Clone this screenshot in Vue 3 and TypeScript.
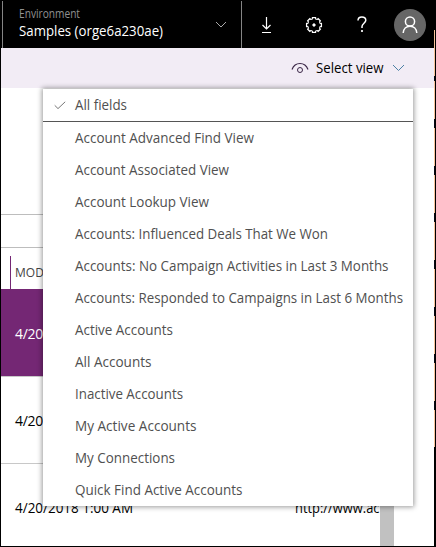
<script setup lang="ts">
interface ViewOption {
  label: string
  width: number
}

const views: ViewOption[] = [
  { label: 'Account Advanced Find View', width: 179 },
  { label: 'Account Associated View', width: 154 },
  { label: 'Account Lookup View', width: 134 },
  { label: 'Accounts: Influenced Deals That We Won', width: 253 },
  { label: 'Accounts: No Campaign Activities in Last 3 Months', width: 313.5 },
  { label: 'Accounts: Responded to Campaigns in Last 6 Months', width: 328 },
  { label: 'Active Accounts', width: 98 },
  { label: 'All Accounts', width: 76.5 },
  { label: 'Inactive Accounts', width: 108 },
  { label: 'My Active Accounts', width: 121.5 },
  { label: 'My Connections', width: 100 },
  { label: 'Quick Find Active Accounts', width: 167.5 },
]

const teeth = [0, 45, 90, 135, 180, 225, 270, 315]
</script>

<template>
  <div class="window">
    <div class="screen">
      <header class="top">
        <div class="env">
          <div class="env-text">
            <div class="env-label"><svg width="62" height="16"><text x="0" y="12" textLength="61" lengthAdjust="spacingAndGlyphs">Environment</text></svg></div>
            <div class="env-name"><svg width="146" height="20"><text x="0" y="14.5" textLength="144" lengthAdjust="spacingAndGlyphs">Samples (orge6a230ae)</text></svg></div>
          </div>
          <svg class="env-chevron" width="12" height="8" viewBox="0 0 12 8"><path d="M1 1l5 5 5-5" /></svg>
        </div>
        <div class="tool"><svg width="12" height="18" viewBox="0 0 12 18"><path d="M6.500 1v12M2.500 9l4 4 4-4M2 16.500h9" /></svg></div>
        <div class="tool gear">
          <svg width="18" height="18" viewBox="-9 -9 18 18">
            <path v-for="angle in teeth" :key="angle" :transform="`rotate(${angle})`" d="M-2.400-5.800Q-1.700-5.700-1.500-7.400H1.500Q1.700-5.700 2.400-5.800" />
            <circle cx="0" cy="0" r="1.200" class="dot" />
          </svg>
        </div>
        <div class="tool help"><svg width="10" height="17" viewBox="0 0 10 17"><path d="M1 4.500C1 2.300 2.700 1 4.900 1S8.800 2.300 8.800 4.300C8.800 7 5 7.500 5 10.500V12" /><circle cx="5" cy="15" r=".7" class="dot" /></svg></div>
        <div class="avatar"><svg width="16" height="18" viewBox="0 0 16 18"><circle cx="8" cy="5.500" r="4.600" /><path d="M1.200 17c.2-4 3-6.800 6.800-6.800s6.600 2.800 6.800 6.800" /></svg></div>
      </header>

      <div class="command">
        <svg class="eye" width="18" height="12" viewBox="0 0 18 12"><path d="M1 7.500C2.500 3.500 5.500 1.500 9 1.500S15.500 3.500 17 7.500" /><circle cx="9" cy="8" r="2.500" /></svg>
        <svg class="select" width="70" height="20"><text x="0" y="15" textLength="67.500" lengthAdjust="spacingAndGlyphs">Select view</text></svg>
        <svg class="chevron" width="13" height="8" viewBox="0 0 13 8"><path d="M1 1l5.500 5.500L12 1" /></svg>
      </div>

      <main class="grid">
        <div class="table">
          <div class="band band-top"></div>
          <div class="band"></div>
          <div class="columns"><span class="column">MOD</span></div>
          <div class="row selected"><span class="date">4/20</span></div>
          <div class="row"><span class="date">4/20</span></div>
          <div class="row last">
            <svg class="date" width="120" height="20"><text x="0" y="16" textLength="118" lengthAdjust="spacingAndGlyphs">4/20/2018 1:00 AM</text></svg>
            <svg class="link" width="85" height="20"><text x="0" y="16" textLength="84.500" lengthAdjust="spacingAndGlyphs">http://www.ac</text></svg>
          </div>
        </div>
        <div class="scroll"></div>
      </main>
    </div>
    <div class="edge"><i v-for="n in 8" :key="n"></i></div>

    <div class="menu">
      <div class="option current">
        <svg class="check" width="12" height="9" viewBox="0 0 12 9"><path d="M.7 4.300l3.300 3.300L11.200.8" /></svg>
        <svg class="label" width="60" height="20"><text x="0" y="15" textLength="52" lengthAdjust="spacingAndGlyphs">All fields</text></svg>
      </div>
      <div v-for="view in views" :key="view.label" class="option">
        <svg class="label" width="335" height="20"><text x="0" y="15" :textLength="view.width" lengthAdjust="spacingAndGlyphs">{{ view.label }}</text></svg>
      </div>
    </div>
  </div>
</template>

<style>
body {
  margin: 0;
}
</style>

<style scoped>
.window {
  position: relative;
  box-sizing: border-box;
  display: flex;
  width: 436px;
  height: 547px;
  padding: 1px;
  background: #000;
  overflow: hidden;
  font-family: "Open Sans", "Noto Sans", sans-serif;
  font-size: 14px;
}
svg {
  display: block;
  flex: none;
  overflow: visible;
}
path,
circle {
  fill: none;
  stroke: currentColor;
}
.screen {
  width: 433px;
  height: 545px;
  overflow: hidden;
  background: #fff;
}
.top {
  display: flex;
  align-items: center;
  height: 47px;
  background: #000;
  color: #fff;
}
.env {
  box-sizing: border-box;
  display: flex;
  align-items: center;
  width: 240px;
  height: 47px;
  margin-left: 1px;
  padding: 0 14px 0 16px;
  border: solid #858585;
  border-width: 0 1px;
}
.env-text {
  flex: 1;
  padding-bottom: 3px;
}
.env-label {
  height: 15px;
  font-size: 12px;
}
.env-label text {
  fill: #919191;
}
.env-name text {
  fill: #fff;
}
.env-name {
  height: 20px;
}
.env-chevron {
  color: #aaa;
}
.tool {
  display: flex;
  justify-content: center;
  width: 48px;
}
.tool path {
  stroke-width: 1.2;
}
.gear path {
  stroke-width: 1.3;
}
.help path {
  stroke-width: 1.5;
}
.dot {
  fill: currentColor;
}
.avatar {
  display: flex;
  align-items: center;
  justify-content: center;
  width: 32px;
  height: 32px;
  margin-left: 8px;
  border-radius: 50%;
  background: #666;
}
.avatar svg {
  stroke-width: 1.5;
}
.command {
  display: flex;
  align-items: center;
  height: 40px;
  padding-left: 290px;
  background: #f2ecf5;
}
.eye {
  color: #3b2747;
}
.select {
  margin-left: 7px;
}
.chevron {
  margin-left: 6px;
  color: #4c80a5;
}
.eye path {
  stroke-width: 1.2;
}
.grid {
  display: flex;
  height: 458px;
}
.table {
  width: 379px;
}
.band {
  box-sizing: border-box;
  height: 33px;
  border-bottom: 1px solid #bdbdbd;
}
.band-top {
  height: 127px;
}
.columns {
  box-sizing: border-box;
  height: 41px;
  padding: 8px 0 0 9px;
}
.column {
  display: block;
  height: 33px;
  padding-left: 4px;
  border-left: 1px solid #742774;
  color: #444;
  font-size: 12px;
  line-height: 33px;
}
.row {
  box-sizing: border-box;
  display: flex;
  align-items: center;
  height: 87px;
  padding-left: 14px;
  border-top: 1px solid #c8c8c8;
}
.selected {
  border-color: #742774;
  background: #742774;
  color: #fff;
}
.date {
  white-space: nowrap;
  letter-spacing: -0.3px;
}
.last .date {
  letter-spacing: 0;
}
.link {
  margin-left: 160px;
}
.scroll {
  width: 14px;
  margin-top: 380px;
  background: #c1c1c1;
}
.edge {
  box-sizing: border-box;
  width: 1px;
  height: 417px;
  margin-top: 29px;
  padding-top: 42px;
  background: #f8c49c;
}
.edge i {
  display: block;
  height: 9px;
  margin-bottom: 38px;
  background: #080814;
}
.edge i:first-child {
  height: 5px;
  margin: 4px 0 38px;
}
.menu {
  position: absolute;
  left: 43px;
  top: 89px;
  width: 370px;
  height: 417px;
  background: #fff;
  box-shadow: 0 0 5px 1px rgba(0, 0, 0, 0.4);
}
.option {
  display: flex;
  align-items: center;
  height: 32px;
  padding-left: 32px;
}
.option text {
  fill: #505050;
}
.current {
  gap: 9px;
  padding-left: 11px;
  border-bottom: 1px solid #555;
}
.check {
  color: #777;
}
</style>
